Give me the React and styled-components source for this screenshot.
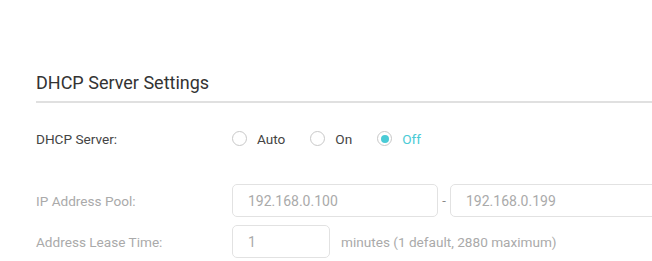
import React, { useState } from 'react';
import styled, { createGlobalStyle } from 'styled-components';

const GlobalStyle = createGlobalStyle`
  html, body {
    margin: 0;
    padding: 0;
    background: #fff;
    overflow: hidden;
  }
  body {
    font-family: Roboto, "Liberation Sans", Arial, sans-serif;
    color: #333;
  }
`;

const Page = styled.div`
  width: 652px;
  height: 261px;
  padding: 70px 0 0 36px;
  box-sizing: border-box;
  overflow: hidden;
`;

const SectionTitle = styled.h2`
  margin: 0;
  font-size: 18px;
  font-weight: 400;
  line-height: 26px;
  color: #333;
  padding-bottom: 5px;
  border-bottom: 2px solid #e0e0e0;
`;

const Form = styled.div`
  display: flex;
  flex-direction: column;
  padding-top: 19px;
`;

const Row = styled.div`
  display: grid;
  grid-template-columns: 196px minmax(0, 1fr);
  align-items: center;
  min-height: 33px;
  margin-top: ${p => p.gap || 0}px;
`;

const Label = styled.div`
  font-size: 13.6px;
  color: ${p => (p.disabled ? '#aaa' : '#444')};
`;

const Controls = styled.div`
  display: flex;
  align-items: center;
  white-space: nowrap;
  overflow: hidden;
`;

const RadioLabel = styled.label`
  display: flex;
  align-items: center;
  margin-right: 25px;
  font-size: 13.6px;
  color: ${p => (p.checked ? '#4acbd6' : '#444')};
  cursor: pointer;
`;

const RadioCircle = styled.span`
  width: 15px;
  height: 15px;
  box-sizing: border-box;
  border-radius: 50%;
  border: 1.5px solid #c8c8c8;
  display: flex;
  align-items: center;
  justify-content: center;
  margin-right: 10px;

  &::after {
    content: '';
    width: 8px;
    height: 8px;
    border-radius: 50%;
    background: #4acbd6;
    display: ${p => (p.checked ? 'block' : 'none')};
  }
`;

const TextInput = styled.input`
  box-sizing: border-box;
  height: 33px;
  width: ${p => p.w}px;
  border: 1px solid #e2e2e2;
  border-radius: 5px;
  padding: 0 15px;
  font-family: inherit;
  font-size: 14px;
  color: #aaa;
  background: #fff;
  outline: none;
  flex-shrink: 0;

  &:disabled {
    color: #aaa;
    background: #fff;
  }
`;

const Dash = styled.span`
  flex: 0 0 12px;
  text-align: center;
  font-size: 13px;
  color: #888;
`;

const Hint = styled.span`
  margin-left: 11px;
  font-size: 13.6px;
  color: #aaa;
`;

const options = ['Auto', 'On', 'Off'];

export default function App() {
  const [mode, setMode] = useState('Off');
  const off = mode === 'Off';

  return (
    <>
      <GlobalStyle />
      <Page>
        <SectionTitle>DHCP Server Settings</SectionTitle>
        <Form>
          <Row>
            <Label>DHCP Server:</Label>
            <Controls>
              {options.map(o => (
                <RadioLabel key={o} checked={mode === o} onClick={() => setMode(o)}>
                  <RadioCircle checked={mode === o} />
                  {o}
                </RadioLabel>
              ))}
            </Controls>
          </Row>
          <Row gap={29}>
            <Label disabled={off}>IP Address Pool:</Label>
            <Controls>
              <TextInput w={206} defaultValue="192.168.0.100" disabled={off} />
              <Dash>-</Dash>
              <TextInput w={400} defaultValue="192.168.0.199" disabled={off} />
            </Controls>
          </Row>
          <Row gap={8}>
            <Label disabled={off}>Address Lease Time:</Label>
            <Controls>
              <TextInput w={98} defaultValue="1" disabled={off} />
              <Hint>minutes (1 default, 2880 maximum)</Hint>
            </Controls>
          </Row>
        </Form>
      </Page>
    </>
  );
}
